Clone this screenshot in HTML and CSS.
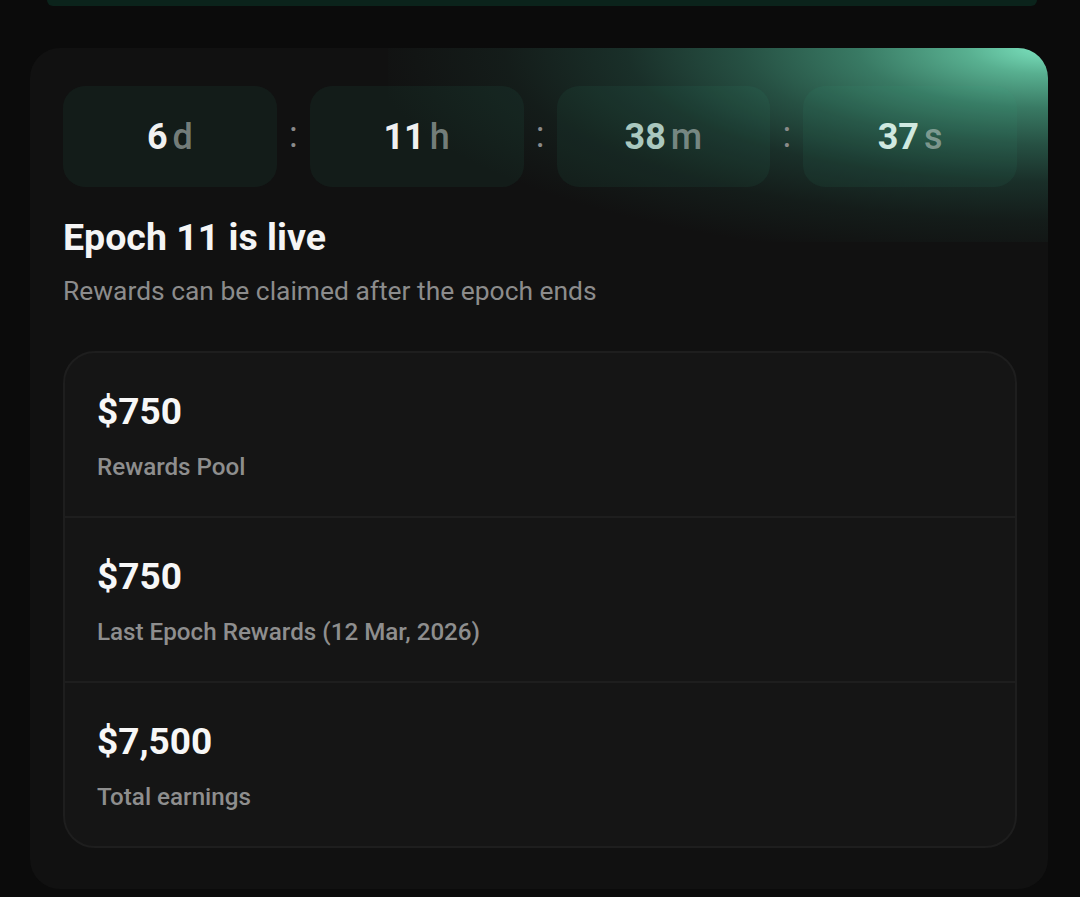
FILE: index.html
```html
<!DOCTYPE html>
<html lang="en">
<head>
<meta charset="utf-8">
<title>Epoch rewards</title>
<link rel="stylesheet" href="styles.css">
</head>
<body>
<div class="prev-card"></div>
<section class="card">
  <div class="glow"></div>
  <div class="timer">
    <div class="tbox"><span class="num num-a">6</span><span class="unit">d</span></div>
    <div class="colon">:</div>
    <div class="tbox"><span class="num num-a">11</span><span class="unit">h</span></div>
    <div class="colon">:</div>
    <div class="tbox"><span class="num num-c">38</span><span class="unit">m</span></div>
    <div class="colon">:</div>
    <div class="tbox"><span class="num num-d">37</span><span class="unit">s</span></div>
  </div>
  <h2 class="title">Epoch 11 is live</h2>
  <p class="subtitle">Rewards can be claimed after the epoch ends</p>
  <div class="stats">
    <div class="stat">
      <div class="value">$750</div>
      <div class="label">Rewards Pool</div>
    </div>
    <div class="stat">
      <div class="value">$750</div>
      <div class="label">Last Epoch Rewards (12 Mar, 2026)</div>
    </div>
    <div class="stat">
      <div class="value">$7,500</div>
      <div class="label">Total earnings</div>
    </div>
  </div>
</section>
</body>
</html>
```

FILE: styles.css
```css
* { box-sizing: border-box; }
html, body { margin: 0; padding: 0; }
body {
  background: #0b0b0b;
  font-family: Roboto, "Noto Sans", "Liberation Sans", sans-serif;
  color: #f2f2f2;
  height: 897px;
  overflow: hidden;
}
.prev-card {
  height: 6px;
  margin: 0 43px 0 47px;
  background: #0b231b;
  border-radius: 0 0 18px 18px;
}
.card {
  position: relative;
  overflow: hidden;
  margin: 42px 32px 0 30px;
  background: #111111;
  border-radius: 30px;
  padding: 38px 31px 41px 33px;
}
.glow {
  position: absolute;
  top: 0;
  right: 0;
  width: 660px;
  height: 194px;
  background:
    radial-gradient(ellipse 680px 215px at 100% 0%,
      rgba(125, 228, 192, 1) 0%,
      rgba(92, 184, 151, 0.95) 12%,
      rgba(62, 136, 111, 0.88) 28%,
      rgba(44, 98, 81, 0.78) 45%,
      rgba(31, 66, 56, 0.62) 62%,
      rgba(24, 44, 38, 0.42) 80%,
      rgba(17, 17, 17, 0) 100%);
}
.timer {
  position: relative;
  display: flex;
  align-items: center;
}
.tbox {
  flex: 1;
  height: 101px;
  border-radius: 22px;
  background: rgba(60, 180, 140, 0.075);
  display: flex;
  align-items: center;
  justify-content: center;
  font-size: 36px;
  line-height: 1;
}
.num { font-weight: 700; }
.num-a { color: #f0f0f0; }
.num-c { color: #aac8bf; }
.num-d { color: #d0e9e0; }
.unit {
  font-weight: 500;
  color: rgba(200, 210, 206, 0.55);
  margin-left: 5px;
}
.colon {
  width: 33px;
  text-align: center;
  color: #8a8a8a;
  font-size: 36px;
  line-height: 1;
  padding-bottom: 3px;
}
.title {
  position: relative;
  margin: 28px 0 0 0;
  font-size: 37.5px;
  line-height: 44px;
  font-weight: 700;
  color: #f5f5f5;
}
.subtitle {
  position: relative;
  margin: 17px 0 0 0;
  font-size: 26.4px;
  line-height: 31px;
  color: #8c8c8c;
}
.stats {
  position: relative;
  margin-top: 44px;
  background: #151515;
  border: 2px solid #1e1e1e;
  border-radius: 32px;
}
.stat {
  padding: 37px 32px 35px 32px;
}
.stat + .stat {
  border-top: 2px solid #1e1e1e;
}
.value {
  font-size: 37px;
  line-height: 43px;
  font-weight: 700;
  color: #f7f7f7;
}
.label {
  margin-top: 20px;
  font-size: 24.2px;
  line-height: 28px;
  font-weight: 500;
  color: #8e8e8e;
}
```
